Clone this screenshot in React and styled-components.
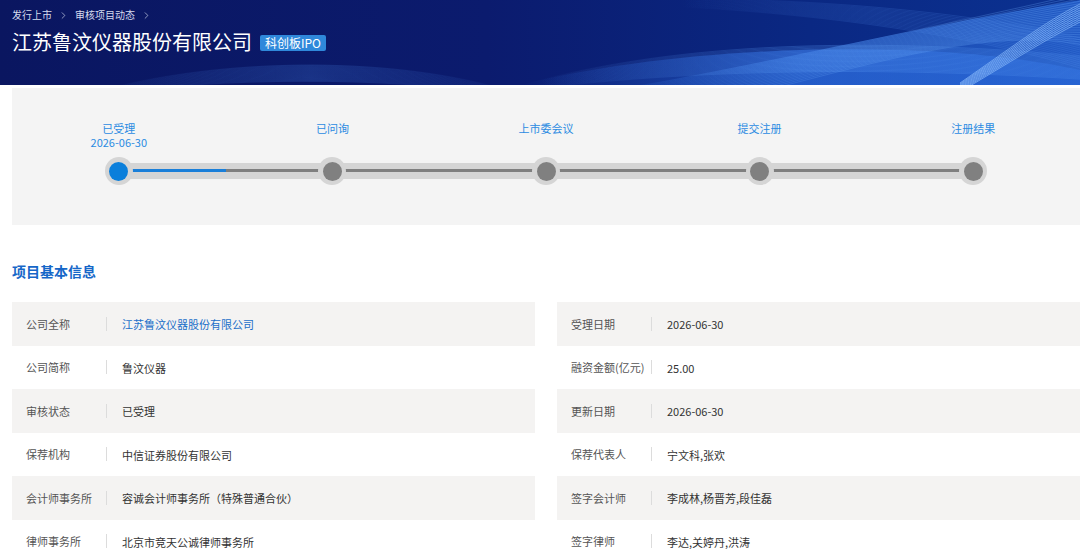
import React from "react";
import styled, { createGlobalStyle } from "styled-components";
import { ChevronRight } from "lucide-react";

const GlobalStyle = createGlobalStyle`
  * { box-sizing: border-box; }
  body {
    margin: 0;
    background: #fff;
    font-family: "Noto Sans CJK SC", "Noto Sans", sans-serif;
    overflow: hidden;
  }
`;

const Page = styled.div`
  width: 1080px;
  height: 555px;
  overflow: hidden;
`;

const Header = styled.header`
  position: relative;
  height: 85px;
  padding: 7px 0 0 12px;
  overflow: hidden;
  background: linear-gradient(90deg, #0a1660 0%, #0b1b6e 45%, #0a2883 75%, #0b3292 100%);
`;

const HeaderArt = styled.svg`
  position: absolute;
  left: 0;
  top: 0;
  width: 1080px;
  height: 85px;
`;

const HeaderContent = styled.div`
  position: relative;
  z-index: 1;
`;

const Crumbs = styled.nav`
  display: flex;
  align-items: center;
  gap: 6px;
  font-size: 10px;
  line-height: 16px;
  color: #d5dbee;
  svg { color: #c9d0e6; }
`;

const TitleRow = styled.div`
  display: flex;
  align-items: center;
  gap: 8px;
  margin-top: 4px;
`;

const Title = styled.h1`
  margin: 0;
  font-size: 20px;
  font-weight: 400;
  line-height: 30px;
  color: #fff;
`;

const Badge = styled.span`
  display: inline-block;
  padding: 0 5px;
  height: 16px;
  line-height: 16px;
  font-size: 12px;
  color: #fff;
  background: #2f88db;
  border-radius: 2px;
  margin-top: 1px;
`;

const Body = styled.main`
  padding: 3px 0 0 12px;
`;

const Progress = styled.section`
  display: grid;
  grid-template-columns: repeat(5, 1fr);
  height: 137px;
  padding-top: 33px;
  background: #f4f4f4;
`;

const Step = styled.div`
  display: flex;
  flex-direction: column;
  align-items: stretch;
`;

const StepText = styled.div`
  height: 36px;
  text-align: center;
  font-size: 11px;
  line-height: 14px;
  color: #2b8be2;
`;

const Track = styled.div`
  display: flex;
  align-items: center;
  height: 28px;
`;

const Half = styled.div`
  flex: 1;
  height: 16px;
  background: ${(p) =>
    p.$empty
      ? "transparent"
      : `linear-gradient(#d5d5d5 0 6.5px, ${p.$done ? "#1a7fd9" : "#7f7f7f"} 6.5px 9.5px, #d5d5d5 9.5px)`};
  margin: ${(p) => (p.$side === "left" ? "0 -4px 0 0" : "0 0 0 -4px")};
`;

const Node = styled.div`
  position: relative;
  z-index: 1;
  flex: none;
  width: 28px;
  height: 28px;
  border-radius: 50%;
  background: #d5d5d5;
  display: flex;
  align-items: center;
  justify-content: center;

  &::after {
    content: "";
    width: 19px;
    height: 19px;
    border-radius: 50%;
    background: ${(p) => (p.$active ? "#0b7fdb" : "#808080")};
  }
`;

const SectionTitle = styled.h2`
  margin: 0;
  padding: 36px 0 0;
  height: 77px;
  font-size: 14px;
  line-height: 20px;
  font-weight: 700;
  color: #1667c8;
`;

const InfoGrid = styled.div`
  display: grid;
  grid-template-columns: 523px 523px;
  column-gap: 22px;
`;

const Row = styled.div`
  display: flex;
  align-items: center;
  height: 43.5px;
  font-size: 11px;
  background: ${(p) => (p.$shaded ? "#f4f3f2" : "#fff")};
`;

const Label = styled.div`
  flex: none;
  width: 95px;
  padding-left: 14px;
  color: #555;
  border-right: 1px solid #dcdcdc;
  line-height: 14px;
  white-space: nowrap;
`;

const Value = styled.div`
  padding-left: 15px;
  padding-top: 1px;
  color: ${(p) => (p.$link ? "#1c6fc9" : "#333")};
  line-height: 14px;
  white-space: nowrap;
`;

const steps = [
  { name: "已受理", date: "2026-06-30", active: true },
  { name: "已问询" },
  { name: "上市委会议" },
  { name: "提交注册" },
  { name: "注册结果" },
];

const rows = [
  [["公司全称", "江苏鲁汶仪器股份有限公司", true], ["受理日期", "2026-06-30"]],
  [["公司简称", "鲁汶仪器"], ["融资金额(亿元)", "25.00"]],
  [["审核状态", "已受理"], ["更新日期", "2026-06-30"]],
  [["保荐机构", "中信证券股份有限公司"], ["保荐代表人", "宁文科,张欢"]],
  [["会计师事务所", "容诚会计师事务所（特殊普通合伙）"], ["签字会计师", "李成林,杨晋芳,段佳磊"]],
  [["律师事务所", "北京市竞天公诚律师事务所"], ["签字律师", "李达,关婷丹,洪涛"]],
];

// bundle of thin curves for the header waves
const Bundle = ({ count, build, stroke, width = 0.6 }) => (
  <g stroke={stroke} strokeWidth={width} fill="none">
    {Array.from({ length: count }, (_, i) => (
      <path key={i} d={build(i)} />
    ))}
  </g>
);

const fade = (id, x1, x2, color, a, b, c = b) => (
  <linearGradient id={id} gradientUnits="userSpaceOnUse" x1={x1} y1="0" x2={x2} y2="0">
    <stop offset="0" stopColor={color} stopOpacity={a} />
    <stop offset="0.5" stopColor={color} stopOpacity={b} />
    <stop offset="1" stopColor={color} stopOpacity={c} />
  </linearGradient>
);

const Waves = () => (
  <HeaderArt viewBox="0 0 1080 85" preserveAspectRatio="none">
    <defs>
      {fade("gArc", 100, 520, "#4f8ff0", 0, 0.35, 0)}
      {fade("gBand", 540, 1080, "#5c9cf6", 0, 0.5, 0.35)}
      {fade("gDiag", 620, 1080, "#6aa8f8", 0, 0.45, 0.5)}
      {fade("gTop", 680, 1080, "#5590f0", 0, 0.3, 0.35)}
      {fade("gFill", 520, 1080, "#2a66d8", 0, 0.65, 0.55)}
      {fade("gFill2", 580, 1080, "#2d6fe0", 0, 0.4, 0.65)}
    </defs>
    <path d="M520 85 C 620 60, 760 46, 900 50 C 990 53, 1040 62, 1080 70 L1080 85 Z" fill="url(#gFill)" />
    <path d="M640 85 C 760 65, 900 30, 1080 0 L1080 85 Z" fill="url(#gFill2)" />
    <Bundle
      count={18}
      stroke="url(#gArc)"
      build={(i) => `M110 ${88 + i * 0.3} C 220 ${60 + i * 1.1}, 380 ${55 + i * 1.2}, 500 ${88 + i * 0.4}`}
    />
    <Bundle
      count={22}
      stroke="url(#gBand)"
      build={(i) => `M540 ${80 + i * 0.4} C 680 ${44 + i * 1.3}, 860 ${36 + i * 1.4}, 1080 ${56 + i * 1.1}`}
    />
    <Bundle
      count={22}
      stroke="url(#gDiag)"
      build={(i) => `M${620 + i * 7} 90 C ${780 + i * 5} 60, ${930 + i * 3} 28, 1080 ${-6 + i * 2.4}`}
    />
    <Bundle
      count={16}
      stroke="url(#gTop)"
      build={(i) => `M680 ${-2 + i * 0.6} C 840 ${0 + i * 1}, 980 ${14 + i * 1.6}, 1080 ${38 + i * 2}`}
    />
    <Bundle
      count={10}
      stroke="#8abafa"
      width={0.7}
      build={(i) => `M960 ${92 - i} C 1010 ${62 - i * 1.5}, 1045 ${40 - i * 2}, 1080 ${22 - i * 2}`}
    />
  </HeaderArt>
);

export default function App() {
  return (
    <Page>
      <GlobalStyle />
      <Header>
        <Waves />
        <HeaderContent>
          <Crumbs>
            <span>发行上市</span>
            <ChevronRight size={11} strokeWidth={1.5} />
            <span>审核项目动态</span>
            <ChevronRight size={11} strokeWidth={1.5} />
          </Crumbs>
          <TitleRow>
            <Title>江苏鲁汶仪器股份有限公司</Title>
            <Badge>科创板IPO</Badge>
          </TitleRow>
        </HeaderContent>
      </Header>

      <Body>
        <Progress>
          {steps.map((s, i) => (
            <Step key={s.name}>
              <StepText>
                <div>{s.name}</div>
                {s.date && <div>{s.date}</div>}
              </StepText>
              <Track>
                <Half $side="left" $empty={i === 0} />
                <Node $active={s.active} />
                <Half $side="right" $empty={i === steps.length - 1} $done={i === 0} />
              </Track>
            </Step>
          ))}
        </Progress>

        <SectionTitle>项目基本信息</SectionTitle>

        <InfoGrid>
          {rows.map((pair, r) =>
            pair.map(([label, value, link], c) => (
              <Row key={`${r}-${c}`} $shaded={r % 2 === 0}>
                <Label>{label}</Label>
                <Value $link={link}>{value}</Value>
              </Row>
            ))
          )}
        </InfoGrid>
      </Body>
    </Page>
  );
}
